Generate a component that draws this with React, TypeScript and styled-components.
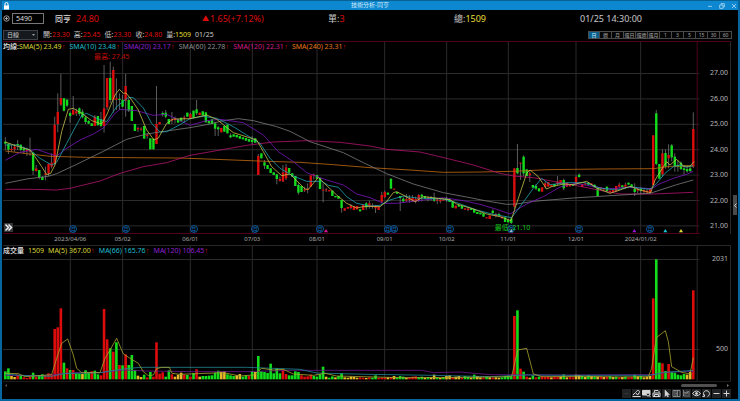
import React from "react";
import styled, { createGlobalStyle } from "styled-components";

const GlobalStyle = createGlobalStyle`
  * { box-sizing: border-box; }
  html, body { margin: 0; background: #000; }
  body { font-family: "Noto Sans", "Noto Sans CJK TC", sans-serif; color: #c9c9c9; }
  button, input, select { font-family: inherit; margin: 0; padding: 0; }
`;

const UP = "#dc0c0c";
const DOWN = "#12dc1c";
const FLAT = "#e5b729";

/* ---------- market data, in chart units (three per screen pixel) ---------- */

const STEP = 9.255;
const FIRST = 16;
const LEFT = 9;
const WIDTH = 2091;

// side, body top, body bottom, optional high and low
const CANDLES = `
G 275 281 262 299;G 281 299 281 312;R 297 300 285 304;R 290 298 283 305;G 282 285 270 300;G 284 300 284 304;G 296 301 290 312;R 300 303 293 318;
R 302 305 263 318;G 308 362 308 375;R 355 363 345 365;G 360 381 360 388;G 381 390 378 390;R 370 374 350 391;R 342 370 340 378;R 338 350 310 355;
R 224 340 200 345;R 186 222 130 247;R 144 164 72 168;G 145 182 144 185;G 149 167 149 172;G 189 198 185 218;R 180 194 138 194;R 184 190 176 198;
G 175 192 172 198;G 185 202 178 205;G 202 216 198 222;G 213 221 210 222;G 220 228;R 200 228 195 228;G 198 226;G 208 228 186 232;
R 175 228 45 248;R 84 172 84 180;G 84 150 35 160;R 60 150 50 188;R 145 149 85 180;G 147 150 130 180;G 150 170 135 172;R 108 152 72 200;
G 150 182 145 186;G 168 213;G 222 243;R 234 238 230 246;R 236 239 232 244;G 228 266;R 255 258 250 266;G 265 298;G 266 298;R 222 282 108 282;
R 216 223;G 189 194 184 200;G 188 200 180 205;G 207 222;R 207 212 186 222;R 205 210 200 220;G 207 218;G 203 214;R 202 205 196 216;G 188 200;
R 192 204 188 206;G 182 203;G 178 190 150 195;R 188 195;G 184 196;G 187 217;G 213 220;G 208 222;G 220 236 215 258;G 232 238 228 258;
R 234 247;G 228 245;G 224 250;G 256 262 250 264;G 253 260;G 255 262;G 258 266;G 262 268;G 264 272;G 267 275;G 270 276 258 282;G 265 278;
R 318 375 312 375;G 310 325;G 337 347 330 357;G 345 357;G 355 369;G 367 375;G 373 387 373 403;R 387 393 380 395;R 367 394 345 396;R 352 385 342 390;
G 354 368;G 370 380;G 378 408;G 405 428 400 434;G 408 426;R 418 422 410 426;R 416 420 400 430;R 376 410;R 374 378 370 388;G 375 386;G 384 417;
R 419 422 400 457;R 418 421 414 426;R 420 424;G 422 438;G 438 442;G 438 446;G 450 474 450 488;R 475 482;R 471 476;R 468 474 462 478;R 469 480;
R 468 478;G 478 484;R 464 480;G 460 472 456 480;R 460 470 452 476;R 467 471 460 476;R 468 475 465 489;R 470 480;R 435 455 425 460;R 426 441 422 444;
G 428 434;G 386 416;R 416 419;G 426 431;G 438 444 438 483;G 446 454 440 458;R 447 452 432 456;R 445 450 435 458;R 444 452 435 456;R 447 455 440 460;
R 435 450 432 456;G 434 440 432 454;G 438 446;R 442 446 438 454;G 443 447 438 452;G 443 452 428 456;R 448 452 444 462;R 450 454 446 460;R 448 452;
G 444 450 440 456;G 448 456;G 455 473;R 467 475;G 465 470;G 468 476;R 475 479;R 476 480 472 484;G 476 480;G 477 488;G 486 492;G 488 493;G 490 500;
R 502 505;R 497 507;G 482 489 478 496;R 493 498 488 502;G 492 496 488 500;R 500 505;G 502 516;G 510 517;G 506 519 500 522;R 355 470 355 476;
G 354 370 282 372;R 338 341 338 390;G 320 370 316 378;G 358 378;R 370 376 364 396;G 405 413;G 408 416 402 420;G 415 424;R 412 425;R 400 410 394 416;
R 396 410;R 405 410;G 402 409;R 395 402 378 406;R 390 400;G 390 415 386 420;R 398 410;R 405 409;G 403 408;R 381 400 376 404;G 374 381 370 383;
R 403 411;R 400 404;G 398 404;R 400 405;G 404 412;G 414 438;R 412 416;R 415 419;G 410 424;R 422 427;R 420 426;R 408 424;R 404 410 398 416;G 406 412;
R 404 410 398 416;G 398 404;G 403 410;G 417 426 400 438;R 418 422 414 430;G 416 422 412 432;R 420 425 416 432;R 422 428 416 432;R 415 428;
R 256 405;G 190 342 180 346;G 342 386;R 310 373 298 380;G 309 350 298 356;R 315 325 283 355;G 286 322 282 334;G 320 348 310 365;G 345 350 330 365;
G 338 357 334 360;G 355 360 345 374;G 357 364 348 368;G 355 363 350 366;R 237 350 187 354
`
  .split(";")
  .map((row) => {
    const [side, ...nums] = row.trim().split(/\s+/);
    const [top, bottom, high = top, low = bottom] = nums.map(Number);
    return { color: side === "R" ? UP : DOWN, top, bottom, high, low };
  });

// side and bar height, one entry per trading day
const VOLUMES = `
G24 G33 Y10 Y7 R14 G11 R6 R4 R8 G20 R8 G12 G15 R10 R18 R14 R151 R156 R213 G50 R33 G28 R28 G18 G17 Y16 G27 G20 R24 G26 G15 R12
R211 R120 G93 R83 G111 R43 G42 R75 G43 G73 G28 Y11 Y7 G14 R6 G22 R8 R111 R17 R21 G8 G27 R15 Y8 Y14 Y20 R14 G13 R8 G19 R30 Y8
G10 G10 G11 G12 G20 G26 Y23 Y24 G15 G12 G10 Y12 Y16 G8 G12 R10 G25 Y22 G70 G24 G22 G19 G47 G18 G33 G18 R30 R16 G12 G12 G24 G22
R12 R8 R9 R14 G10 G8 G15 G38 Y8 G5 G9 Y6 G10 G18 Y6 Y5 Y8 Y7 Y5 R6 R5 Y4 R6 G5 G12 R4 R5 R5 Y6 R7 Y10 G6 G10 G8 Y5 R6 R8 R9 G6 G8 Y5
G7 Y6 Y14 G6 Y4 G7 Y10 Y12 R6 Y8 Y10 R5 G10 G8 Y5 G14 Y10 Y6 R5 G8 Y6 R5 Y6 Y5 G6 G10 G11 G9 R190 G207 R32 G23 R8 Y5 G12 R6 G8
R9 R7 R8 Y6 R8 R7 Y8 G15 Y6 R8 R6 Y14 Y13 G10 Y7 G12 Y9 G8 Y8 R8 Y7 R8 G9 Y7 G8 R6 Y7 G8 R6 R7 G14 Y9 G10 Y6 Y8 Y10
R243 G360 G50 R48 G25 R46 G22 G20 G14 G12 G16 Y14 Y22 R267
`
  .trim()
  .split(/\s+/)
  .map((v) => ({ color: v[0] === "R" ? UP : v[0] === "G" ? DOWN : FLAT, size: Number(v.slice(1)) }));

const PRICE_LINES = [
  { color: "#c46a12", points: "16,303 90,312 150,319 260,322 380,323 540,324 700,330 800,334 900,337 1000,344 1110,353 1230,360 1330,367 1440,366 1540,364 1640,359 1800,357 1960,356 2010,349 2080,348" },
  { color: "#b3146e", points: "16,418 100,418 170,420 210,415 300,393 360,370 430,350 500,338 570,316 650,302 740,286 820,276 920,272 1020,277 1110,288 1160,298 1260,306 1340,325 1420,345 1500,370 1540,378 1600,383 1660,394 1720,405 1800,421 1860,432 1960,432 2080,427" },
  { color: "#7b7b7b", points: "16,400 80,387 145,379 170,371 230,343 310,304 380,268 440,252 500,243 570,233 630,222 670,212 715,206 760,212 830,230 870,244 930,275 1030,308 1090,338 1160,371 1240,402 1330,428 1400,441 1460,453 1520,463 1550,462 1600,454 1660,449 1720,444 1800,439 1880,434 1950,430 1990,417 2030,404 2080,390" },
  { color: "#7a17bd", points: "16,331 60,307 110,298 150,312 170,318 200,295 240,270 280,252 310,234 345,190 360,178 410,182 460,196 500,193 570,226 620,212 660,208 730,218 790,255 835,305 880,335 920,368 980,390 1030,405 1070,432 1110,443 1150,460 1190,460 1270,450 1330,443 1390,452 1440,463 1490,478 1530,492 1580,462 1630,440 1680,411 1725,400 1760,406 1820,417 1880,412 1955,416 1980,401 2020,385 2060,373 2080,364" },
  { color: "#21a2b0", points: "16,285 50,285 90,300 120,325 155,345 170,337 200,280 245,196 260,190 290,205 320,215 350,170 385,142 400,143 430,174 455,220 480,246 500,245 540,224 570,206 610,199 650,205 700,230 740,255 780,280 810,325 840,355 880,378 920,394 965,394 985,406 1015,412 1040,440 1070,460 1110,468 1140,466 1170,450 1210,438 1250,444 1330,447 1370,458 1430,480 1480,493 1535,503 1560,470 1600,415 1625,385 1650,404 1700,398 1755,398 1800,414 1850,420 1890,410 1950,418 1970,400 1995,370 2020,350 2040,345 2060,352 2080,347" },
  { color: "#c5c04d", points: "16,276 50,288 90,300 105,320 125,350 140,374 152,370 165,345 185,245 205,178 220,175 245,190 275,212 305,222 320,195 345,135 358,118 370,130 378,129 395,150 415,180 440,240 462,270 475,264 500,220 520,207 570,206 620,195 650,208 700,248 770,270 790,305 815,350 845,377 870,372 890,392 915,417 925,418 955,382 970,397 1010,435 1040,460 1070,474 1090,470 1110,469 1140,470 1160,454 1180,428 1190,425 1215,438 1245,455 1270,440 1350,449 1370,462 1420,477 1460,492 1500,500 1533,512 1550,460 1580,370 1590,360 1615,380 1640,417 1655,410 1690,402 1720,404 1760,394 1790,414 1830,430 1860,420 1890,409 1920,420 1952,428 1965,390 1990,350 2000,335 2010,345 2030,328 2050,348 2070,348 2082,335" },
];

const VOLUME_LINES = [
  { color: "#6f168f", points: "16,406 130,407 220,398 300,398 370,390 440,393 570,395 735,395 870,391 1000,391 1265,391 1300,398 1380,396 1470,404 1700,405 1900,404 1960,404 2000,397 2080,394" },
  { color: "#1f8696", points: "16,402 60,406 155,409 190,401 300,398 370,387 420,382 740,382 900,388 950,399 1100,403 1300,406 1470,410 1580,405 1700,406 1950,406 1990,397 2040,394 2080,391" },
  { color: "#aaa52d", points: "16,400 55,401 75,410 155,404 170,355 185,310 203,297 220,345 230,385 245,398 300,398 315,355 330,330 350,295 370,342 395,358 415,370 430,395 445,407 460,405 470,386 485,382 508,382 516,400 540,403 670,398 720,408 760,405 785,385 820,390 850,388 880,402 940,406 975,400 1010,408 1200,413 1400,412 1535,410 1553,330 1580,325 1600,402 1625,410 1750,409 1850,411 1945,410 1955,385 1969,293 1996,272 2005,305 2015,380 2045,397 2070,402 2080,353" },
];

const MONTHS = [
  { x: 211, label: "2023/04/06" }, { x: 368, label: "05/02" }, { x: 571, label: "06/01" }, { x: 757, label: "07/03" },
  { x: 951, label: "08/01" }, { x: 1154, label: "09/01" }, { x: 1340, label: "10/02" }, { x: 1525, label: "11/01" },
  { x: 1728, label: "12/01" }, { x: 1922, label: "2024/01/02" },
];
const BADGES = [220, 378, 581, 766, 960, 1163, 1183, 1349, 1534, 1737, 1950];
const MARKERS = [
  { x: 978, color: "#d51594" }, { x: 1534, color: "#ddd" }, { x: 1903, color: "#9818dc" },
  { x: 1996, color: "#1ec5d4" }, { x: 2043, color: "#dfd936" },
];
const PRICES = ["27.00", "26.00", "25.00", "24.00", "23.00", "22.00", "21.00"];

/* ------------------------------- frame ------------------------------- */

const Frame = styled.main`
  min-height: 100vh;
  display: flex;
  flex-direction: column;
  border: 2px solid #07659f;
  border-top: 1px solid #076193;
  background: #000;
`;
const TitleBar = styled.header`
  height: 9px;
  display: grid;
  grid-template-columns: 1fr auto 1fr;
  align-items: center;
  background: #0d87cf;
  color: #d5edfb;
  padding: 0 1px;
`;
const Title = styled.h1`
  margin: 0;
  font-size: 6px;
  line-height: 9px;
  font-weight: 400;
`;
const WindowButtons = styled.div`
  display: flex;
  justify-content: flex-end;
  gap: 5px;
`;
const PlainButton = styled.button`
  display: flex;
  align-items: center;
  justify-content: center;
  width: 7px;
  height: 8px;
  border: 0;
  background: none;
  color: inherit;
  svg { display: block; flex: none; }
`;
const QuoteBar = styled.section`
  height: 17px;
  display: grid;
  grid-template-columns: 74px repeat(5, 1fr);
  align-items: center;
  padding-right: 32px;
  font-size: 9px;
  line-height: 16px;
`;
const Symbol = styled.div`
  display: flex;
  align-items: center;
  padding-left: 1px;
`;
const Code = styled.input`
  width: 32px;
  height: 11px;
  margin-left: 2px;
  padding: 0 0 0 3px;
  border: 1px solid #777;
  border-radius: 0;
  background: #000;
  color: #d8d8d8;
  font-size: 7px;
`;
const StockName = styled.strong`
  font-size: 8px;
  font-weight: 500;
  margin-left: 11px;
  color: #dcdcdc;
`;
const Tone = styled.span<{ $color: string }>`
  color: ${(p) => p.$color};
`;
const Change = styled.span`
  display: flex;
  align-items: center;
  gap: 1px;
  color: ${UP};
`;
const Triangle = styled.span`
  font-size: 7px;
`;
const DayBar = styled.section`
  height: 14px;
  display: flex;
  align-items: center;
  gap: 4px;
  padding: 1px 6px 0 1px;
  font-size: 7px;
  line-height: 10px;
`;
const PeriodSelect = styled.select`
  appearance: none;
  width: 35px;
  height: 10px;
  margin-right: 1px;
  padding-left: 3px;
  border: 1px solid #3c4248;
  border-radius: 0;
  background: #15191d;
  color: #cfcfcf;
  font-size: 6px;
  line-height: 8px;
`;
const SelectBox = styled.span`
  position: relative;
  display: flex;
  svg { position: absolute; right: 4px; top: 4px; }
`;
const Periods = styled.nav`
  display: flex;
  margin-left: auto;
`;
const Period = styled.button<{ $on?: boolean }>`
  width: 12px;
  height: 8px;
  border: 1px solid #4a4a4a;
  border-left-width: ${(p) => (p.$on ? "1px" : "0")};
  background: ${(p) => (p.$on ? "#0b5f8d" : "#050505")};
  color: ${(p) => (p.$on ? "#d9efff" : "#a5a5a5")};
  font-size: 5px;
  line-height: 6px;
  white-space: nowrap;
  display: flex;
  align-items: center;
  justify-content: center;
`;

/* ------------------------------ panels ------------------------------ */

const Body = styled.div`
  flex: 1;
  display: flex;
`;
const Charts = styled.div`
  flex: 1;
  min-width: 0;
  display: flex;
  flex-direction: column;
  padding-left: 1px;
`;
const Panel = styled.section<{ $line: string }>`
  display: grid;
  grid-template-columns: minmax(0, 1fr) 30px;
  border-top: 1px solid ${(p) => p.$line};
  border-right: 1px solid #282828;
`;
const Plot = styled.div<{ $height: number }>`
  position: relative;
  height: ${(p) => p.$height}px;
`;
const PlotSvg = styled.svg`
  display: block;
  width: 100%;
  height: 100%;
`;
const Legend = styled.div`
  position: absolute;
  left: 0;
  top: 0;
  display: flex;
  gap: 4px;
  font-size: 7px;
  line-height: 9px;
  white-space: nowrap;
`;
const LegendItem = styled.span<{ $color: string }>`
  display: flex;
  color: ${(p) => p.$color};
`;
const LegendName = styled.b`
  color: #e4e4e4;
  font-weight: 500;
`;
const Rising = styled.span`
  width: 4px;
  display: flex;
  justify-content: center;
  color: ${UP};
  font-family: "Liberation Sans", sans-serif;
`;
const Scale = styled.div<{ $top: number; $bottom: number }>`
  padding: ${(p) => p.$top}px 2px ${(p) => p.$bottom}px 0;
  display: flex;
  flex-direction: column;
  justify-content: space-between;
  align-items: flex-end;
  font-size: 7px;
  line-height: 10px;
  color: #b5b5b5;
`;
const Dates = styled.div`
  position: relative;
  height: 11px;
  margin-right: 31px;
  font-size: 6px;
  line-height: 10px;
  color: #aaa;
`;
const DateLabel = styled.time`
  position: absolute;
  transform: translateX(-50%);
`;
const Extreme = styled.span<{ $color: string }>`
  position: absolute;
  font-size: 7px;
  line-height: 9px;
  white-space: nowrap;
  color: ${(p) => p.$color};
`;
const MonthBadge = styled.span`
  position: absolute;
  bottom: 1px;
  width: 8px;
  height: 8px;
  margin-left: -4px;
  border: 1px solid #0c5594;
  border-radius: 50%;
  color: #1578cc;
  font-size: 5px;
  line-height: 6px;
  display: flex;
  align-items: center;
  justify-content: center;
`;
const Expand = styled.button`
  position: absolute;
  left: 1px;
  bottom: 2px;
  width: 9px;
  height: 9px;
  border: 0;
  background: #34383b;
  display: flex;
  align-items: center;
  justify-content: center;
`;
const Footer = styled.footer`
  display: flex;
  flex-direction: column;
  align-items: stretch;
`;
const ScrollTrack = styled.div`
  height: 8px;
  display: flex;
  align-items: center;
  justify-content: space-between;
  padding: 0 2px;
  border-top: 1px solid #1c1c1c;
`;
const Thumb = styled.div`
  width: 36px;
  height: 3px;
  border-radius: 2px;
  margin: 0 10px 0 auto;
  background: #505050;
`;
const Tools = styled.div`
  align-self: flex-end;
  display: flex;
  gap: 1px;
`;
const Tool = styled.button`
  width: 9px;
  height: 9px;
  border: 0;
  background: #202224;
  color: #d4d4d4;
  display: flex;
  align-items: center;
  justify-content: center;
  svg { display: block; flex: none; }
`;
const SideRail = styled.aside`
  width: 7px;
  padding: 154px 1px 0 2px;
`;
const RailHandle = styled.button`
  width: 4px;
  height: 20px;
  border: 0;
  background: #4a4a4a;
  display: flex;
  align-items: center;
  justify-content: center;
  svg { flex: none; }
`;

const pct = (x: number) => `${((x - LEFT) / WIDTH) * 100}%`;

function Icon({ children, size = 9 }: { children: React.ReactNode; size?: number }) {
  return (
    <svg width={size} height={size} viewBox="0 0 18 18" fill="none" stroke="currentColor" strokeWidth="2" aria-hidden="true">
      {children}
    </svg>
  );
}

const TOOLS: { name: string; art: React.ReactNode }[] = [
  { name: "空白", art: <path d="M5 9h8" stroke="#34373a" /> },
  { name: "畫線", art: <path d="M1 15h16M2 12l5-5 4 5 3-3M9 6a3 3 0 1 1 5 2l-3 3" /> },
  { name: "查詢視窗", art: <><path d="M1 3h15v9H1z" fill="currentColor" /><circle cx="12" cy="11" r="3" fill="#202224" /><path d="m14 13 3 3" /></> },
  { name: "列印", art: <><path d="M5 7V3h7l2 2v2" /><path d="M2 8h14v7H2z" /><path d="M5 11h8v4H5z" /></> },
  { name: "游標", art: <path d="M6 2v13l3-3 2 4 2-1-2-4h4z" fill="currentColor" strokeWidth="1" /> },
  { name: "資訊", art: <path d="M2 3h14v12H2zM6 3v12M11 3v12M8 6h2M8 9h2M8 12h2" strokeWidth="1" /> },
  { name: "指標", art: <path d="M3 2v12h13M6 12V7M10 11V3M14 12V5M4 6l5 2 6-4" strokeWidth="1" /> },
  { name: "顯示", art: <><path d="M1 9q8-10 16 0-8 9-16 0z" /><circle cx="9" cy="9" r="2" fill="currentColor" /></> },
  { name: "重新整理", art: <path d="M5 14a6 6 0 1 1 6 1M5 15v-4M5 15H1" /> },
  { name: "縮小", art: <path d="M3 9h12" /> },
  { name: "放大", art: <path d="M3 9h12M9 3v12" /> },
];

function Average({ color, children }: { color: string; children: string }) {
  return <LegendItem $color={color}>{children}<Rising>↑</Rising></LegendItem>;
}

function Lines({ lines }: { lines: { color: string; points: string }[] }) {
  return (
    <>
      {lines.map((l) => (
        <polyline key={l.color} points={l.points} fill="none" stroke={l.color} strokeWidth="2.4" strokeLinejoin="round" />
      ))}
    </>
  );
}

function PriceChart() {
  return (
    <PlotSvg viewBox={`${LEFT} -24 ${WIDTH} 576`} preserveAspectRatio="none" role="img" aria-label="日線K線圖">
      <g stroke="#2b2b2b" strokeWidth="3">
        {PRICES.map((p, i) => <path key={p} d={`M9 ${70.5 + i * 76.2}H2098`} />)}
        {MONTHS.map((m) => <path key={m.x} d={`M${m.x} -24V550`} />)}
      </g>
      <path d="M2091.500 -24V550.500M9 550.500H2100" fill="none" stroke="#50001d" strokeWidth="3" />
      {CANDLES.map((c, i) => {
        const x = FIRST + i * STEP;
        return (
          <g key={i}>
            <path d={`M${x} ${c.high}V${c.low}`} stroke="#8b8b8b" strokeWidth="2" />
            <rect x={x - 3.6} y={c.top} width="7.200" height={Math.max(3, c.bottom - c.top)} fill={c.color} />
          </g>
        );
      })}
      <Lines lines={PRICE_LINES} />
      {MARKERS.map((m) => <path key={m.x} d={`M${m.x - 6} 547l6-10 6 10z`} fill={m.color} />)}
    </PlotSvg>
  );
}

function VolumeChart() {
  return (
    <PlotSvg viewBox={`${LEFT} 18 ${WIDTH} 405`} preserveAspectRatio="none" role="img" aria-label="成交量圖">
      <g stroke="#2b2b2b" strokeWidth="3">
        <path d="M9 58.500H2098M9 328.500H2098M2091.500 18V423" />
        {MONTHS.map((m) => <path key={m.x} d={`M${m.x} 18V423`} />)}
      </g>
      {VOLUMES.map((v, i) => (
        <rect key={i} x={FIRST + i * STEP - 3.9} y={418 - v.size} width="7.800" height={v.size} fill={v.color} />
      ))}
      <Lines lines={VOLUME_LINES} />
    </PlotSvg>
  );
}

export default function App() {
  return (
    <>
      <GlobalStyle />
      <Frame>
        <TitleBar>
          <svg width="7" height="8" viewBox="0 0 14 16" aria-hidden="true">
            <path d="M4 8V4a3 3 0 0 1 6 0v4" fill="none" stroke="#fff" strokeWidth="2" />
            <path d="M2 7h10v8H2z" fill="#fff" />
          </svg>
          <Title>技術分析-同亨</Title>
          <WindowButtons>
            <PlainButton aria-label="最小化"><Icon size={6}><path d="M3 10h12" /></Icon></PlainButton>
            <PlainButton aria-label="還原"><Icon size={6}><path d="M2 6h10v10H2zM6 5V2h10v10h-3" /></Icon></PlainButton>
            <PlainButton aria-label="關閉"><Icon size={6}><path d="m3 3 12 12M15 3 3 15" /></Icon></PlainButton>
          </WindowButtons>
        </TitleBar>

        <QuoteBar>
          <Symbol>
            <PlainButton aria-label="加入自選">
              <Icon size={7}><circle cx="9" cy="9" r="7" /><path d="M9 5v8M5 9h8" /></Icon>
            </PlainButton>
            <Code aria-label="股票代號" defaultValue="5490" />
            <StockName>同亨</StockName>
          </Symbol>
          <Tone $color={UP}>24.80</Tone>
          <Change><Triangle>▲</Triangle>1.65(+7.12%)</Change>
          <span>單:<Tone $color={UP}>3</Tone></span>
          <span>總:<Tone $color="#e6df35">1509</Tone></span>
          <time>01/25 14:30:00</time>
        </QuoteBar>

        <DayBar>
          <SelectBox>
            <PeriodSelect aria-label="週期" defaultValue="日線">
              <option>日線</option>
              <option>週線</option>
              <option>月線</option>
            </PeriodSelect>
            <svg width="3" height="2" viewBox="0 0 6 4" aria-hidden="true"><path d="M0 0h6L3 4z" fill="#999" /></svg>
          </SelectBox>
          <span>開:<Tone $color={UP}>23.30</Tone></span>
          <span>高:<Tone $color={UP}>25.45</Tone></span>
          <span>低:<Tone $color={UP}>23.30</Tone></span>
          <span>收:<Tone $color={UP}>24.80</Tone></span>
          <span>量:<Tone $color="#e6df35">1509</Tone></span>
          <time>01/25</time>
          <Periods aria-label="K線週期">
            {["日", "週", "月", "還日", "還週", "還月", "1", "3", "5", "15", "30", "60"].map((p, i) => (
              <Period key={p} $on={i === 0}>{p}</Period>
            ))}
          </Periods>
        </DayBar>

        <Body>
          <Charts>
            <Panel $line="#50001d">
              <Plot $height={192}>
                <PriceChart />
                {BADGES.map((x) => <MonthBadge key={x} style={{ left: pct(x) }}>月</MonthBadge>)}
                <Legend>
                  <LegendItem $color="#d8d338"><LegendName>均線:</LegendName>SMA(5) 23.49<Rising>↑</Rising></LegendItem>
                  <Average color="#20bccb">SMA(10) 23.48</Average>
                  <Average color="#8f21d0">SMA(20) 23.17</Average>
                  <Average color="#8d8d8d">SMA(60) 22.78</Average>
                  <Average color="#d01b87">SMA(120) 22.31</Average>
                  <Average color="#e67719">SMA(240) 23.31</Average>
                </Legend>
                <Extreme $color="#c10c0c" style={{ left: pct(282), top: 10 }}>最高: 27.45</Extreme>
                <Extreme $color="#12c51b" style={{ left: pct(1484), bottom: 2 }}>最低: 21.10</Extreme>
                <Expand aria-label="展開">
                  <Icon><path d="m3 3 6 6-6 6M9 3l6 6-6 6" stroke="#eee" strokeWidth="3" /></Icon>
                </Expand>
              </Plot>
              <Scale $top={26} $bottom={3}>{PRICES.map((p) => <span key={p}>{p}</span>)}</Scale>
            </Panel>
            <Dates>
              {MONTHS.map((m) => <DateLabel key={m.x} style={{ left: pct(m.x) }}>{m.label}</DateLabel>)}
            </Dates>
            <Panel $line="#282828">
              <Plot $height={135}>
                <VolumeChart />
                <Legend>
                  <LegendName>成交量</LegendName>
                  <LegendItem $color="#d8d338">1509</LegendItem>
                  <Average color="#d8d338">MA(5) 367.00</Average>
                  <Average color="#20bccb">MA(66) 165.76</Average>
                  <Average color="#8f21d0">MA(120) 106.45</Average>
                </Legend>
              </Plot>
              <Scale $top={8} $bottom={27}><span>2031</span><span>500</span></Scale>
            </Panel>
            <Footer>
              <ScrollTrack>
                <svg width="2" height="3" viewBox="0 0 4 6" aria-hidden="true"><path d="M4 0v6L0 3z" fill="#555" /></svg>
                <Thumb />
                <svg width="2" height="3" viewBox="0 0 4 6" aria-hidden="true"><path d="M0 0v6l4-3z" fill="#777" /></svg>
              </ScrollTrack>
              <Tools>
                {TOOLS.map((t) => <Tool key={t.name} aria-label={t.name}><Icon>{t.art}</Icon></Tool>)}
              </Tools>
            </Footer>
          </Charts>
          <SideRail>
            <RailHandle aria-label="展開側欄">
              <svg width="3" height="5" viewBox="0 0 6 10" aria-hidden="true"><path d="M5 1 1 5l4 4" fill="none" stroke="#ccc" strokeWidth="2" /></svg>
            </RailHandle>
          </SideRail>
        </Body>
      </Frame>
    </>
  );
}
